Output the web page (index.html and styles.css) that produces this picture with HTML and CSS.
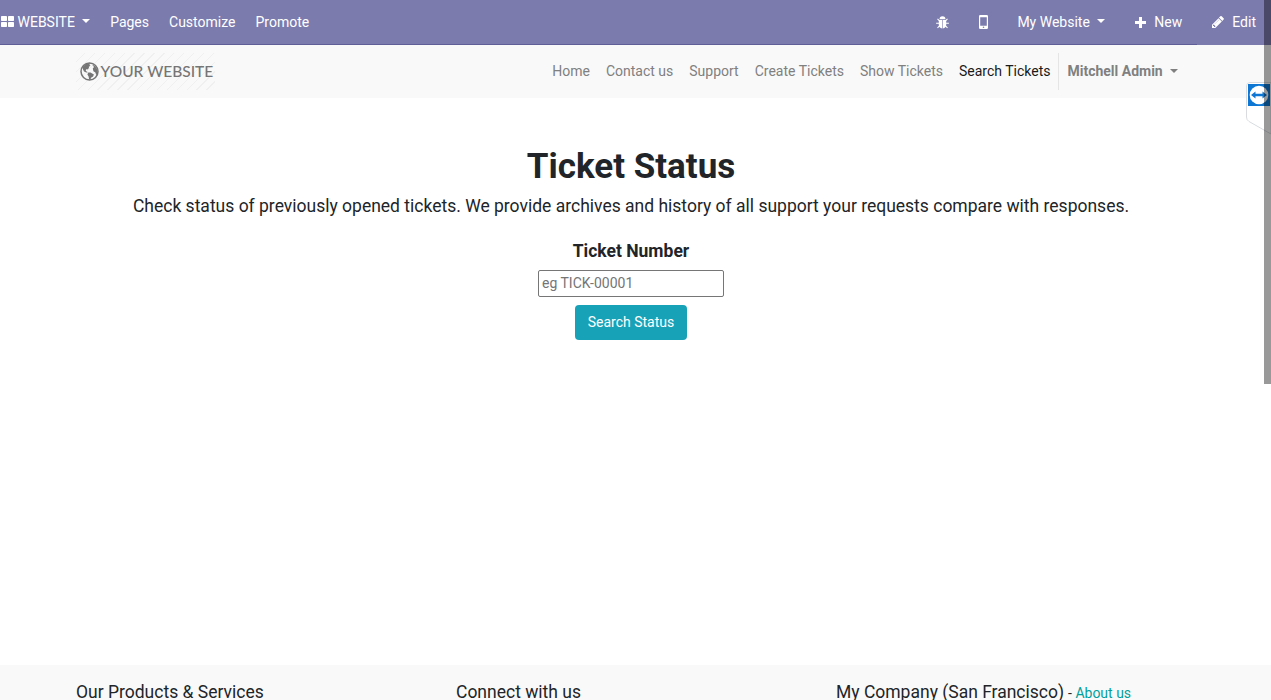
FILE: index.html
```html
<!DOCTYPE html>
<html lang="en">
<head>
<meta charset="utf-8">
<title>Ticket Status | My Website</title>
<link rel="stylesheet" href="styles.css">
</head>
<body>
<nav class="topbar">
  <div class="topbar-left">
    <a class="brand"><svg class="icon-apps" viewBox="0 0 13 11"><rect width="6" height="5" rx=".7"/><rect x="7" width="6" height="5" rx=".7"/><rect y="6" width="6" height="5" rx=".7"/><rect x="7" y="6" width="6" height="5" rx=".7"/></svg><span>WEBSITE</span><i class="caret"></i></a>
    <a>Pages</a><a>Customize</a><a>Promote</a>
  </div>
  <div class="topbar-right">
    <a class="tool"><svg class="icon-bug" viewBox="0 0 13 13"><path d="M3.500 3.200a3 3 0 0 1 6 0z"/><path d="M2.800 3.900h3.400v8.500C4 12.300 2.800 10.900 2.800 9zM6.800 3.900h3.400V9c0 1.900-1.200 3.300-3.400 3.400z"/><path class="legs" d="M3.500 4.800 1.500 2.800M9.500 4.800l2-2M3.300 7.300H.1M9.700 7.300h3.200M3.700 9.600l-2.200 2.200M9.300 9.600l2.200 2.200"/></svg></a>
    <a class="tool phone"><svg class="icon-phone" viewBox="0 0 9 14"><path fill-rule="evenodd" d="M1.300 0h6.400Q9 0 9 1.300v11.400Q9 14 7.700 14H1.300Q0 14 0 12.700V1.300Q0 0 1.300 0zM1.200 2.200v8.600h6.600V2.200zM4.500 11.500a.8.8 0 1 0 0 1.600.8.8 0 0 0 0-1.600z"/></svg></a>
    <a class="site">My Website<i class="caret"></i></a>
    <a class="new"><svg class="icon-plus" viewBox="0 0 11 11"><path d="M4 0h3v4h4v3H7v4H4V7H0V4h4z"/></svg>New</a>
    <a class="edit"><svg class="icon-pencil" viewBox="0 0 12 12"><path fill-rule="evenodd" d="M2.900 11l.7-.7-1.900-1.900-.7.7V10h1v1zM6.900 3.700 2.600 8q-.2.300 0 .3l4.400-4.300q.2-.4-.1-.3zM6.500 2.200l3.300 3.300L3.300 12H0V8.700zM11.900 2.900q0 .4-.3.700l-1.300 1.300L7 1.600 8.300.3q.7-.6 1.400 0l1.900 1.900q.3.300.3.700z"/></svg>Edit</a>
  </div>
</nav>
<header class="site-header">
  <div class="container header-row">
    <a class="logo"><svg class="icon-globe" viewBox="0 0 19 19"><circle class="ring" cx="9.500" cy="9.500" r="8.500"/><path d="M3 4.500 6 2l4-.8L9.500 3l1 .8-1.700 1L9 6 7.500 7.500 6 7.300l-.2 1.600L7.600 10l-.4.800L4 9.500 2.600 6.500zM8.200 10.600l2.300-.2 3.400 2-.8 2-1.800 1-1.100 2.400-1.100-.3-.5-3-1.200-2z"/><path d="m12 2.500 3 1.400 2.200 3.200.5 4-1.500 2.200-.8-2.900-2-1.200-.6-2.700L14 5z"/></svg><span class="logo-text">YOUR WEBSITE</span></a>
    <nav class="menu"><a>Home</a><a>Contact us</a><a>Support</a><a>Create Tickets</a><a>Show Tickets</a><a class="active">Search Tickets</a><a class="user">Mitchell Admin<i class="caret"></i></a></nav>
  </div>
</header>
<main class="content">
  <h1>Ticket Status</h1>
  <p class="lead">Check status of previously opened tickets. We provide archives and history of all support your requests compare with responses.</p>
  <label class="field-label" for="ticket">Ticket Number</label>
  <input class="field" id="ticket" type="text" placeholder="eg TICK-00001">
  <button class="submit">Search Status</button>
</main>
<footer class="footer">
  <div class="container footer-row">
    <h5>Our Products &amp; Services</h5>
    <h5>Connect with us</h5>
    <h5>My Company (San Francisco)<small> - <a>About us</a></small></h5>
  </div>
</footer>
<div class="remote-tab">
  <svg viewBox="0 0 25 54"><path class="tab-outline" d="M25 .5H4Q.5.500.500 4v31q0 3 2.500 4.500L25 52z"/><rect class="tab-blue" x="2" y="2" width="22" height="22"/><circle class="tab-disc" cx="13" cy="13" r="9.300"/><path class="tab-blue" d="M5 13l4.500-3.500v2.300h7V9.500L21 13l-4.500 3.500v-2.300h-7v2.300z"/></svg>
</div>
<div class="scroll-thumb"></div>
</body>
</html>
```

FILE: styles.css
```css
* { box-sizing: border-box; }
body { margin: 0; width: 1271px; height: 700px; overflow: hidden; display: flex; flex-direction: column; position: relative; background: #fff; color: #212529; font: 14px/21px Roboto, sans-serif; }
svg { display: block; flex: none; }
.caret { display: inline-block; border: 4px solid transparent; border-top-color: currentColor; border-bottom: 0; }
.topbar { flex: none; height: 45px; display: flex; justify-content: space-between; background: linear-gradient(#5f5e97, #5f5e97) 0 100% / 1197px 1px no-repeat #7c7bad; color: #fff; }
.topbar svg { fill: #fff; }
.topbar-left, .topbar-right { display: flex; height: 44px; }
.topbar a { display: flex; align-items: center; padding: 0 10px; }
.topbar .brand { padding-left: 1px; }
.topbar .icon-apps { width: 13px; height: 11px; margin-right: 3.5px; margin-top: -1px; }
.topbar .caret { margin-left: 7px; margin-top: -2px; }
.topbar .brand .caret { margin-left: 7.3px; }
.topbar-right { padding-right: 7px; }
.topbar .tool { padding: 0 14px; }
.topbar .phone { padding: 0 15px; }
.icon-bug { width: 13px; height: 13px; margin-right: 1px; }
.legs { fill: none; stroke: #fff; stroke-width: 1.1; }
.icon-phone { width: 9px; height: 14px; }
.topbar .site, .topbar .new { padding: 0 15px; }
.topbar .site { padding-left: 14.2px; }
.topbar .site .caret { margin-left: 7.5px; }
.icon-plus { width: 11px; height: 11px; margin-right: 8px; }
.topbar .edit { padding: 0 8px 0 15px; }
.icon-pencil { width: 12px; height: 12px; margin-right: 8px; }
.container { width: 1140px; margin-left: 61px; padding: 0 15px; }
.site-header { flex: none; height: 53px; padding-top: 8px; background: #f9f9f9; }
.header-row { display: flex; justify-content: space-between; }
.logo { width: 139px; height: 37px; padding-left: 4px; display: flex; align-items: center; color: #757575; font: 500 15.5px/20px Lato, sans-serif; background: repeating-linear-gradient(135deg, #f9f9f9 0 6px, #f0f0f0 6px 7px); white-space: nowrap; }
.logo-text { padding-bottom: 2px; }
.icon-globe { width: 19px; height: 19px; margin-right: 1.6px; fill: #757575; }
.ring { fill: none; stroke: #757575; stroke-width: 1.5; }
.menu { display: flex; height: 37px; color: #808080; }
.menu a { padding: 8px 8px 0; }
.menu .active { color: #1a1a1a; }
.menu .user { border-left: 1px solid #e5e5e5; font-weight: 700; }
.menu .caret { margin-left: 7.3px; vertical-align: 3px; }
.content { flex: none; width: 1262px; height: 567px; padding-top: 48px; display: flex; flex-direction: column; align-items: center; }
h1 { margin: 0 0 5px; font: 700 35px/42px Roboto, sans-serif; }
.lead { margin: 0; font-size: 17.5px; line-height: 26px; }
.field-label { margin-top: 19px; font-size: 17.5px; line-height: 26px; font-weight: 700; }
.field { width: 186px; height: 27px; margin-top: 6px; padding: 0 3px 2px; border: 1px solid #767676; border-radius: 2px; font: 14px/21px Roboto, sans-serif; }
.field::placeholder { color: #757575; }
.submit { width: 112px; height: 35px; margin-top: 8px; padding: 0; border: 0; border-radius: 4px; background: #17a2b8; color: #fff; font: 14px/21px Roboto, sans-serif; }
.footer { flex: none; height: 35px; padding-top: 17px; background: #f9f9f9; overflow: hidden; }
.footer-row { display: grid; grid-template-columns: repeat(3, 380px); }
h5 { margin: 0; font: 400 17.5px/21px Roboto, sans-serif; }
h5 small { font-size: 14px; margin-left: .5px; }
h5 a { color: #00a09d; }
.remote-tab { position: absolute; top: 82px; left: 1246px; width: 25px; height: 54px; }
.tab-outline { fill: #fff; stroke: #d8dce0; }
.tab-blue { fill: #0e76d3; }
.tab-disc { fill: #fff; }
.scroll-thumb { position: absolute; top: 0; right: 0; width: 7px; height: 384px; background: rgba(0, 0, 0, .4); }
```
